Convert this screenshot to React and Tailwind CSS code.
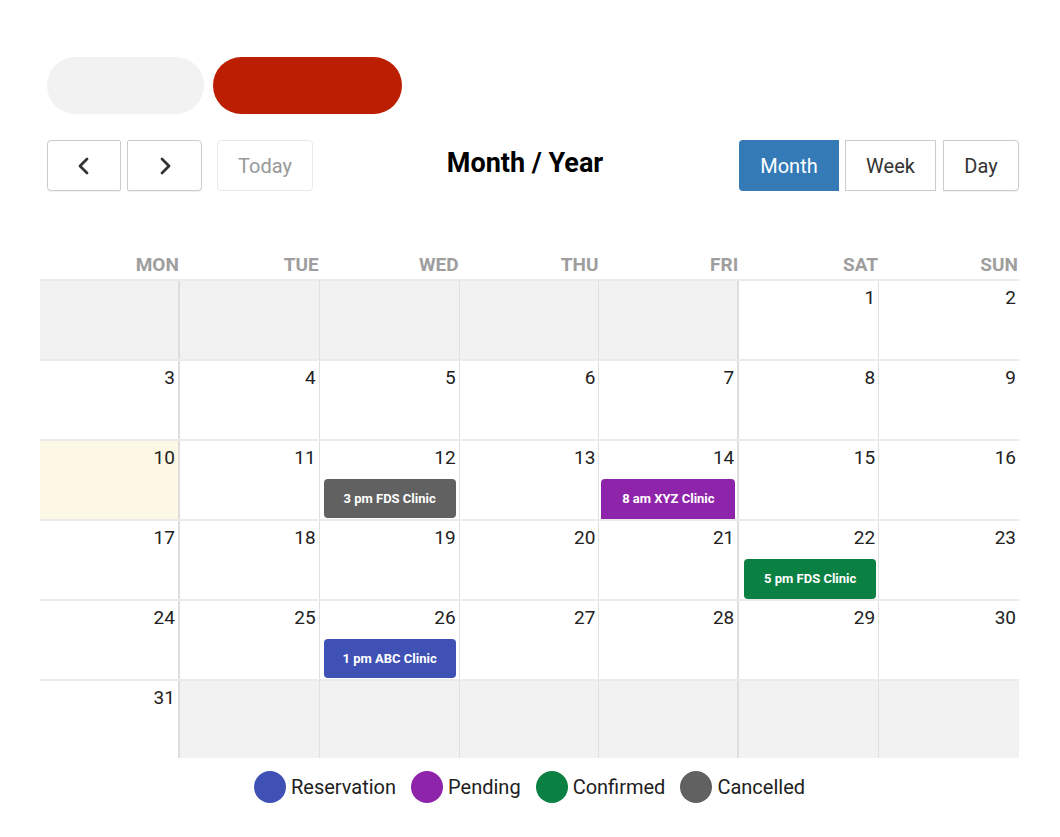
import React from "react";

const days = ["MON", "TUE", "WED", "THU", "FRI", "SAT", "SUN"];

const weeks = [
  [null, null, null, null, null, 1, 2],
  [3, 4, 5, 6, 7, 8, 9],
  [10, 11, 12, 13, 14, 15, 16],
  [17, 18, 19, 20, 21, 22, 23],
  [24, 25, 26, 27, 28, 29, 30],
  [31, null, null, null, null, null, null],
];

const events = {
  12: { label: "3 pm FDS Clinic", cls: "bg-[#616161] ml-[4px] mr-[3px] h-[39px] rounded-[4px]" },
  14: { label: "8 am XYZ Clinic", cls: "bg-[#8e24aa] ml-[2px] mr-[2px] h-[40px] rounded-t-[4px]" },
  22: { label: "5 pm FDS Clinic", cls: "bg-[#0b8043] ml-[5px] mr-[2px] h-[40px] rounded-[4px]" },
  26: { label: "1 pm ABC Clinic", cls: "bg-[#3f51b5] ml-[4px] mr-[3px] h-[39px] rounded-[4px]" },
};

function colBorder(i) {
  if (i === 0 || i === 4) return "border-r-2 border-r-[#dedede]";
  if (i === 6) return "";
  return "border-r border-r-[#e0e0e0]";
}

function Chevron({ dir }) {
  return (
    <svg width="24" height="24" viewBox="0 0 24 24" fill="none" stroke="#333" strokeWidth="2.8" strokeLinecap="round" strokeLinejoin="round">
      {dir === "left" ? <path d="M15 19l-7-7 7-7" /> : <path d="M9 19l7-7-7-7" />}
    </svg>
  );
}

export default function App() {
  return (
    <div className="w-[1060px] h-[837px] bg-white font-['Roboto','Liberation_Sans',sans-serif] text-[#212121]">
      <div className="pt-[57px] pl-[47px] flex gap-[9px]">
        <div className="w-[157px] h-[57px] rounded-full bg-[#f2f2f2]" />
        <div className="w-[189px] h-[57px] rounded-full bg-[#bb1e00]" />
      </div>

      <div className="mt-[26px] ml-[47px] mr-[41px] h-[51px] flex items-center justify-between">
        <div className="flex h-full">
          <button className="w-[74px] h-full flex items-center justify-center border border-[#cccccc] rounded-l-[4px] rounded-r-[2px] bg-white shadow-[0_1px_1px_rgba(0,0,0,0.06)]">
            <Chevron dir="left" />
          </button>
          <button className="ml-[6px] w-[75px] h-full flex items-center justify-center border border-[#cccccc] rounded-r-[4px] rounded-l-[2px] bg-white shadow-[0_1px_1px_rgba(0,0,0,0.06)]">
            <Chevron dir="right" />
          </button>
          <button className="ml-[15px] w-[96px] h-full flex items-center justify-center border border-[#e8e8e8] rounded-[4px] bg-white text-[20px] text-[#999999]">
            Today
          </button>
        </div>
        <div className="text-[27px] font-bold text-black leading-none -mt-[5px] ml-[-2px]">Month / Year</div>
        <div className="flex h-full">
          <button className="w-[100px] h-full flex items-center justify-center rounded-l-[4px] bg-[#337ab7] text-white text-[20px]">
            Month
          </button>
          <button className="ml-[6px] w-[91px] h-full flex items-center justify-center border border-[#cccccc] bg-white text-[20px] text-[#333]">
            Week
          </button>
          <button className="ml-[7px] w-[76px] h-full flex items-center justify-center border border-[#cccccc] rounded-r-[4px] bg-white text-[20px] text-[#333] shadow-[0_1px_1px_rgba(0,0,0,0.06)]">
            Day
          </button>
        </div>
      </div>

      <div className="mt-[59px] ml-[40px] w-[979px]">
        <div className="grid grid-cols-7 h-[29px]">
          {days.map((d) => (
            <div key={d} className="flex items-end justify-end pb-[3px] pr-[1px] text-[19px] leading-[22px] font-bold text-[#9e9e9e]">
              {d}
            </div>
          ))}
        </div>
        {weeks.map((week, wi) => (
          <div
            key={wi}
            className={"grid grid-cols-7 border-t-2 border-t-[#ebebeb] " + (wi < 5 ? "h-[80px]" : "h-[79px]")}
          >
            {week.map((n, i) => {
              const bg = n === null ? "bg-[#f2f2f2]" : n === 10 ? "bg-[#fcf8e3]" : "bg-white";
              const ev = n !== null ? events[n] : null;
              return (
                <div key={i} className={"flex flex-col overflow-hidden " + bg + " " + colBorder(i)}>
                  {n !== null && (
                    <div className="pt-[6px] pr-[3px] text-right text-[19px] leading-[22px] text-[#212121]">{n}</div>
                  )}
                  {ev && (
                    <div className={"mt-[10px] shrink-0 flex items-center justify-center text-white text-[13px] font-bold " + ev.cls}>
                      {ev.label}
                    </div>
                  )}
                </div>
              );
            })}
          </div>
        ))}
      </div>

      <div className="mt-[13px] ml-[40px] w-[979px] flex justify-center items-center text-[20px] text-[#212121]">
        {[
          ["Reservation", "bg-[#3f51b5]"],
          ["Pending", "bg-[#8e24aa]"],
          ["Confirmed", "bg-[#0b8043]"],
          ["Cancelled", "bg-[#616161]"],
        ].map(([label, c], i) => (
          <div key={label} className={"flex items-center " + (i > 0 ? "ml-[15px]" : "")}>
            <span className={"w-[32px] h-[32px] rounded-full " + c} />
            <span className="ml-[5px]">{label}</span>
          </div>
        ))}
      </div>
    </div>
  );
}
